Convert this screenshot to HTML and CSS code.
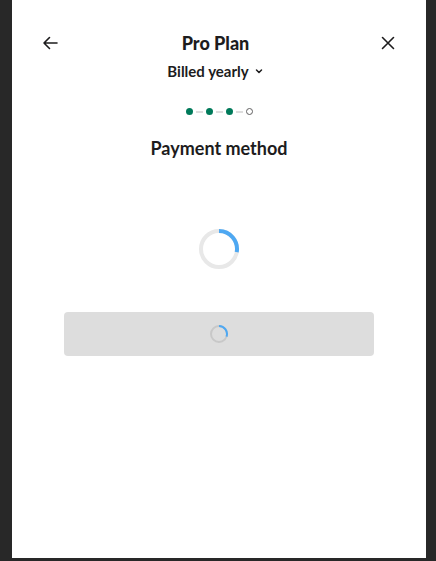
FILE: index.html
```html
<!DOCTYPE html>
<html>
<head>
<meta charset="utf-8">
<link rel="stylesheet" href="styles.css">
</head>
<body>
<div class="frame">
  <div class="panel">
    <div class="header">
      <button class="icon-btn" aria-label="Back">
        <svg width="16" height="16" viewBox="0 0 16 16"><path d="M15 8H2M7.5 2.5L2 8l5.5 5.5" fill="none" stroke="#1d1c1d" stroke-width="1.6" stroke-linecap="round" stroke-linejoin="round"/></svg>
      </button>
      <div class="titles">
        <div class="title">Pro Plan</div>
        <div class="subtitle">Billed yearly
          <svg width="10" height="10" viewBox="0 0 10 10"><path d="M2.5 4l2.5 2.5L7.5 4" fill="none" stroke="#1d1c1d" stroke-width="1.5" stroke-linecap="round" stroke-linejoin="round"/></svg>
        </div>
      </div>
      <button class="icon-btn" aria-label="Close">
        <svg width="16" height="16" viewBox="0 0 16 16"><path d="M2.5 2.5l11 11M13.5 2.5l-11 11" fill="none" stroke="#1d1c1d" stroke-width="1.6" stroke-linecap="round"/></svg>
      </button>
    </div>
    <div class="steps">
      <span class="dot on"></span><span class="dash"></span>
      <span class="dot on"></span><span class="dash"></span>
      <span class="dot on"></span><span class="dash"></span>
      <span class="dot off"></span>
    </div>
    <h2 class="heading">Payment method</h2>
    <div class="loader">
      <svg width="42" height="42" viewBox="0 0 42 42">
        <circle cx="21" cy="21" r="18" fill="none" stroke="#e8e8e8" stroke-width="4"/>
        <path d="M21 3A18 18 0 0 1 38.7 24.2" fill="none" stroke="#4ea8f2" stroke-width="4"/>
      </svg>
    </div>
    <div class="btn-row">
      <div class="submit">
        <svg width="20" height="20" viewBox="0 0 20 20">
          <circle cx="10" cy="10" r="8" fill="none" stroke="#c8c8c8" stroke-width="2"/>
          <path d="M10 2A8 8 0 0 1 17.5 12.7" fill="none" stroke="#4ea8f2" stroke-width="2"/>
        </svg>
      </div>
    </div>
  </div>
</div>
</body>
</html>
```
FILE: styles.css
```css
html, body {
  margin: 0;
  padding: 0;
  background: #282828;
  height: 100%;
}
.frame {
  padding: 0 10px 3px 12px;
  height: 561px;
  box-sizing: border-box;
}
.panel {
  background: #ffffff;
  height: 100%;
  font-family: Lato, "Noto Sans", sans-serif;
  color: #1d1c1d;
  display: flex;
  flex-direction: column;
}
.header {
  display: flex;
  align-items: flex-start;
  justify-content: space-between;
  padding: 30px 24px 0 24px;
}
.icon-btn {
  background: none;
  border: none;
  width: 28px;
  height: 28px;
  margin-top: -1px;
  padding: 0;
  display: flex;
  align-items: center;
  justify-content: center;
  cursor: pointer;
}
.titles {
  display: flex;
  flex-direction: column;
  align-items: center;
  margin-right: 7px;
}
.title {
  font-size: 18px;
  font-weight: 900;
  line-height: 26px;
}
.subtitle {
  margin-top: 3px;
  font-size: 15px;
  font-weight: 700;
  line-height: 24px;
  display: flex;
  align-items: center;
  gap: 5px;
}
.steps {
  display: flex;
  align-items: center;
  justify-content: center;
  margin-top: 25px;
  gap: 3px;
}
.dot {
  width: 7px;
  height: 7px;
  border-radius: 50%;
  box-sizing: border-box;
}
.dot.on { background: #007a5a; }
.dot.off { border: 1px solid #616061; background: #fff; }
.dash {
  width: 7px;
  height: 2px;
  background: #dddddd;
}
.heading {
  margin: 21px 0 0;
  text-align: center;
  font-size: 18px;
  font-weight: 700;
  line-height: 24px;
}
.loader {
  display: flex;
  justify-content: center;
  margin-top: 68px;
}
.btn-row {
  padding: 42px 52px 0 52px;
}
.submit {
  height: 44px;
  border-radius: 4px;
  background: #dddddd;
  display: flex;
  align-items: center;
  justify-content: center;
}
```
